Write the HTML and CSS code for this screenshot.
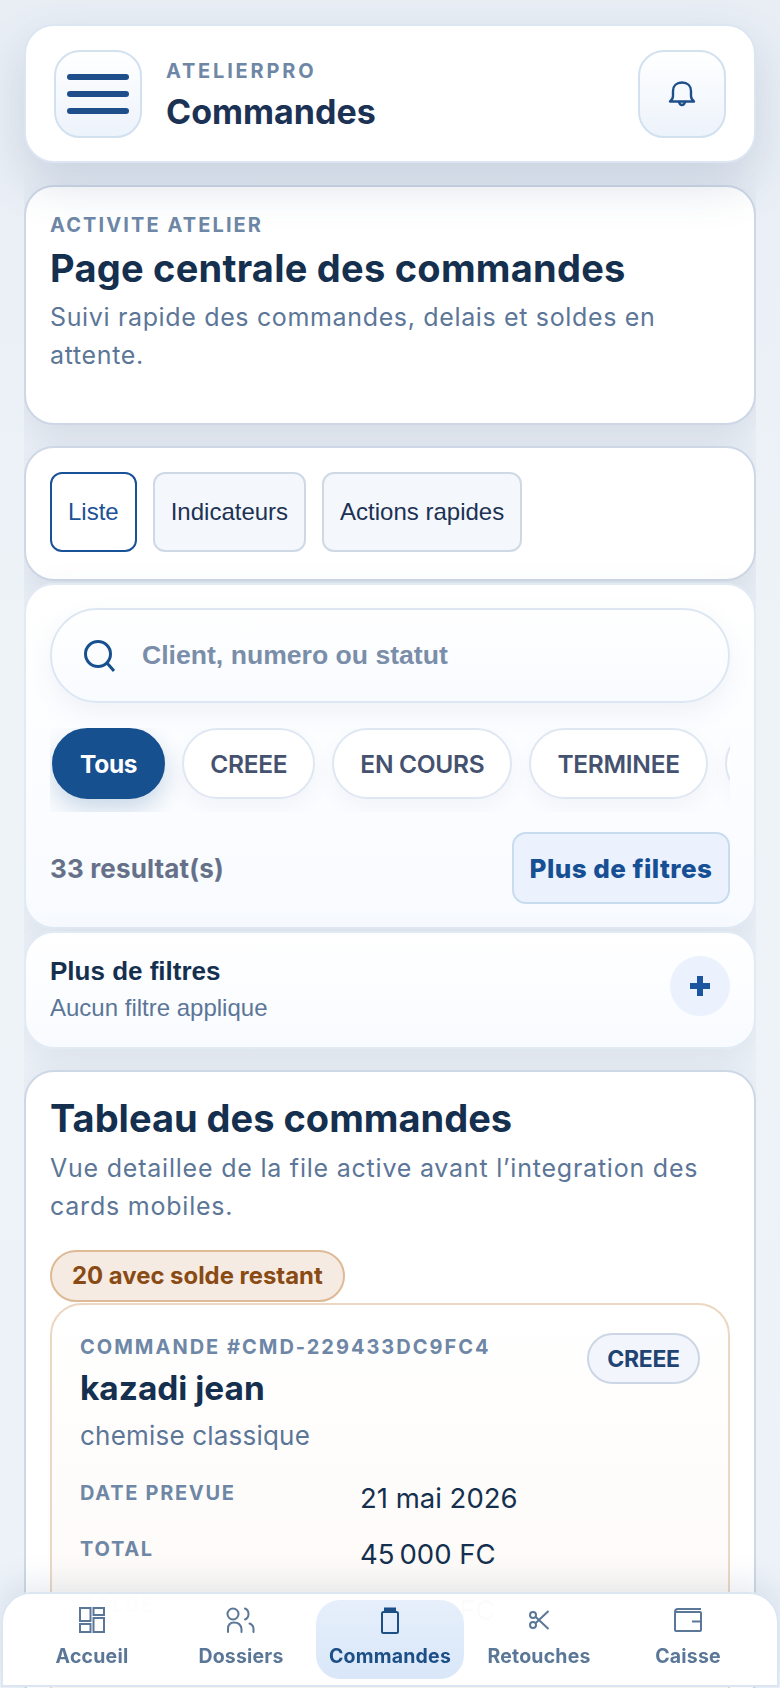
FILE: index.html
```html
<!DOCTYPE html>
<html lang="fr">
<head>
<meta charset="utf-8">
<title>AtelierPro - Commandes</title>
<link rel="stylesheet" href="styles.css">
</head>
<body>
<div class="app">
  <header class="topbar">
    <button class="menu-btn" aria-label="Menu"><span></span><span></span><span></span></button>
    <div class="topbar-text">
      <div class="brand">ATELIERPRO</div>
      <div class="page-name">Commandes</div>
    </div>
    <button class="bell-btn" aria-label="Notifications">
      <svg width="28" height="28" viewBox="0 0 28 28" fill="none" stroke="#1e4f8a" stroke-width="2.4" stroke-linejoin="round" stroke-linecap="round"><path d="M2 21.5h24c-2-1.500-3-3-3-5.500v-5c0-5-3.500-8.500-9-8.500s-9 3.500-9 8.500v5c0 2.500-1 4-3 5.500z"/><path d="M11 22c.5 2 1.500 3 3 3s2.500-1 3-3"/></svg>
    </button>
  </header>
  <main class="content">
    <section class="card hero">
      <div class="eyebrow">ACTIVITE ATELIER</div>
      <h1 class="hero-title">Page centrale des commandes</h1>
      <p class="muted-copy">Suivi rapide des commandes, delais et soldes en attente.</p>
    </section>
    <div class="stack">
      <section class="card tabs-card">
        <button class="tab tab-active">Liste</button>
        <button class="tab">Indicateurs</button>
        <button class="tab">Actions rapides</button>
      </section>
      <section class="soft-card search-card">
        <div class="search">
          <svg width="32" height="32" viewBox="0 0 32 32" fill="none" stroke="#17508f" stroke-width="3"><circle cx="15" cy="14" r="12.500"/><path d="M24 23l7 8"/></svg>
          <span class="search-text">Client, numero ou statut</span>
        </div>
        <div class="chips">
          <span class="chip chip-on">Tous</span>
          <span class="chip">CREEE</span>
          <span class="chip">EN COURS</span>
          <span class="chip">TERMINEE</span>
          <span class="chip chip-hidden" aria-hidden="true"></span>
        </div>
        <div class="result-row">
          <span class="result-count">33 resultat(s)</span>
          <button class="more-btn">Plus de filtres</button>
        </div>
      </section>
      <section class="soft-card filter-card">
        <div>
          <div class="filter-title">Plus de filtres</div>
          <div class="filter-sub">Aucun filtre applique</div>
        </div>
        <span class="plus-btn"><svg width="20" height="20" viewBox="0 0 20 20" fill="#1c559f"><path d="M7 0h6v7h7v6h-7v7H7v-7H0V7h7z"/></svg></span>
      </section>
    </div>
    <section class="card table-card">
      <h2 class="table-title">Tableau des commandes</h2>
      <p class="muted-copy">Vue detaillee de la file active avant l’integration des cards mobiles.</p>
      <div class="balance-pill">20 avec solde restant</div>
      <article class="order">
        <div class="order-head">
          <div>
            <div class="order-num">COMMANDE #CMD-229433DC9FC4</div>
            <div class="order-name">kazadi jean</div>
            <div class="order-item">chemise classique</div>
          </div>
          <span class="status">CREEE</span>
        </div>
        <dl class="facts">
          <dt>DATE PREVUE</dt><dd>21 mai 2026</dd>
          <dt>TOTAL</dt><dd>45&#8239;000 FC</dd>
          <dt>SOLDE</dt><dd>45&#8239;000 FC</dd>
        </dl>
      </article>
    </section>
  </main>
</div>
<nav class="tabbar">
  <a class="nav-item">
    <svg width="26" height="26" viewBox="0 0 26 26" fill="none" stroke="#5b7797" stroke-width="2"><rect x="1" y="1" width="10.500" height="13"/><rect x="14.500" y="1" width="10.500" height="7"/><rect x="1" y="17" width="10.500" height="8"/><rect x="14.500" y="11" width="10.500" height="14"/></svg>
    <span>Accueil</span>
  </a>
  <a class="nav-item">
    <svg width="30" height="26" viewBox="0 0 30 26" fill="none" stroke="#5b7797" stroke-width="2" stroke-linecap="round"><circle cx="7" cy="7" r="5.500"/><path d="M19 1.500c2.500 1 3.500 3 3.500 5.500s-1 4.500-3.500 5.500"/><path d="M2 25v-3c0-4 2-6.500 6-6.500s7 2.500 7.500 6.500v3"/><path d="M23.500 16.500c2.500 1 4 3 4 5.500v3"/></svg>
    <span>Dossiers</span>
  </a>
  <a class="nav-item nav-on">
    <svg width="20" height="28" viewBox="0 0 20 28" fill="none" stroke="#1d4f87" stroke-width="2"><rect x="2" y="6" width="16" height="21" rx="1.500"/><path d="M5 6V2.500h10V6" fill="#1d4f87"/></svg>
    <span>Commandes</span>
  </a>
  <a class="nav-item">
    <svg width="22" height="26" viewBox="0 0 22 26" fill="none" stroke="#5b7797" stroke-width="2"><circle cx="5" cy="8" r="3"/><circle cx="5" cy="18" r="3"/><path d="M7.500 9.800L20.500 22M7.500 16.200L20.500 4"/></svg>
    <span>Retouches</span>
  </a>
  <a class="nav-item">
    <svg width="30" height="26" viewBox="0 0 30 26" fill="none" stroke="#5b7797" stroke-width="2"><path d="M5 2h23M2 5c0-2 1-3 3-3"/><rect x="2" y="5" width="26" height="19" rx="1"/><path d="M19 14.500h9"/></svg>
    <span>Caisse</span>
  </a>
</nav>
</body>
</html>
```
FILE: styles.css
```css
* { box-sizing: border-box; }
html, body { margin: 0; height: 1688px; overflow: hidden; }
body {
  background: linear-gradient(180deg, #e9eef5 0%, #eef3f8 40%, #edf2f8 100%);
  font-family: Inter, "Liberation Sans", sans-serif;
  color: #15304f;
}
button { font: inherit; padding: 0; }
p, h1, h2, dl, dd { margin: 0; }

.app { display: flex; flex-direction: column; height: 1688px; padding-top: 24px; }

.topbar {
  position: relative;
  z-index: 2;
  flex: none;
  margin: 0 24px;
  height: 139px;
  padding: 0 28px;
  display: flex;
  align-items: center;
  gap: 24px;
  background: #fff;
  border: 2px solid #dbe6f2;
  border-radius: 30px;
  box-shadow: 0 20px 48px rgba(64, 94, 135, 0.2);
}
.menu-btn, .bell-btn {
  flex: none;
  width: 88px;
  height: 88px;
  border-radius: 26px;
  border: 2px solid #d2e1f0;
  background: linear-gradient(180deg, #fff 0%, #edf3fb 100%);
  display: flex;
  align-items: center;
  justify-content: center;
}
.menu-btn { flex-direction: column; gap: 11px; }
.menu-btn span { display: block; width: 62px; height: 6px; border-radius: 3px; background: #1e4f8a; }
.bell-btn { margin-left: auto; }
.topbar-text { padding-top: 5px; }
.brand { font-size: 20px; line-height: 24px; font-weight: 700; letter-spacing: 0.14em; color: #6e87a6; }
.page-name { font-size: 34px; line-height: 42px; margin-top: 8px; font-weight: 700; color: #1c3254; }

.content {
  flex: 1;
  min-height: 0;
  margin: 0 24px;
  padding-top: 22px;
  overflow: hidden;
  display: flex;
  flex-direction: column;
  gap: 21px;
}
.stack { display: flex; flex-direction: column; gap: 2px; }

.card {
  flex: none;
  background: #fff;
  border: 2px solid #cdd7e5;
  border-radius: 30px;
  box-shadow: 0 12px 36px rgba(64, 84, 125, 0.14);
}
.soft-card {
  flex: none;
  background: linear-gradient(180deg, #fff 0%, #f8fbff 100%);
  border: 2px solid #e2eaf4;
  border-radius: 30px;
  box-shadow: 0 12px 36px rgba(64, 84, 125, 0.1);
}

.hero { height: 240px; padding: 26px 24px 0; }
.eyebrow { font-size: 20px; line-height: 24px; font-weight: 700; letter-spacing: 0.105em; color: #6e87a6; }
.hero-title { font-size: 38px; line-height: 48px; margin-top: 7px; font-weight: 700; letter-spacing: 0.25px; color: #15304f; }
.muted-copy { font-size: 25px; line-height: 38px; color: #5c7698; margin-top: 6px; letter-spacing: 0.65px; }

.tabs-card { height: 135px; padding: 24px 24px 0; display: flex; gap: 16px; align-items: flex-start; }
.tab {
  height: 80px;
  padding: 0 16px;
  font-family: "Liberation Sans", Arial, sans-serif;
  font-size: 24px;
  color: #1c3254;
  background: #f4f7fc;
  border: 2px solid #cfd9e6;
  border-radius: 12px;
}
.tab-active { background: #fff; border-color: #1a5298; color: #1a5298; }

.search-card { height: 346px; padding: 23px 24px 0; }
.search {
  height: 95px;
  padding: 0 31px;
  display: flex;
  align-items: center;
  gap: 27px;
  border: 2px solid #dde7f3;
  border-radius: 48px;
  background: linear-gradient(180deg, #fff 0%, #f8fbff 100%);
  box-shadow: 0 10px 24px rgba(80, 105, 155, 0.08);
}
.search-text { font-family: "Liberation Sans", Arial, sans-serif; font-size: 26.600px; font-weight: 700; color: #7a8ea9; }
.chips { margin-top: 25px; height: 84px; display: flex; gap: 17px; overflow: hidden; padding: 0 0 0 2px; }
.chip {
  flex: none;
  height: 71px;
  padding: 0 26px;
  display: flex;
  align-items: center;
  font-size: 24.500px;
  font-weight: 600;
  letter-spacing: -0.012em;
  color: #445270;
  background: #fff;
  border: 2px solid #dfe7f2;
  border-radius: 36px;
  box-shadow: 0 8px 20px rgba(80, 105, 155, 0.06);
}
.chip-hidden { width: 120px; }
.chip-on { background: #17508f; border-color: #17508f; color: #fff; font-weight: 700; box-shadow: 0 10px 24px rgba(23, 80, 143, 0.22); }

.result-row { margin-top: 20px; display: flex; justify-content: space-between; align-items: center; }
.result-count { font-size: 26px; font-weight: 700; color: #667189; letter-spacing: 0.15px; }
.more-btn {
  height: 72px;
  width: 218px;
  font-size: 26px;
  font-weight: 800;
  letter-spacing: 0.45px;
  color: #174f95;
  background: #ebf2fd;
  border: 2px solid #c9dbef;
  border-radius: 14px;
}

.filter-card { height: 118px; padding: 20px 24px 0; display: flex; justify-content: space-between; align-items: flex-start; }
.filter-title { font-family: "Liberation Sans", Arial, sans-serif; font-size: 26px; line-height: 36px; font-weight: 700; color: #15304f; }
.filter-sub { font-family: "Liberation Sans", Arial, sans-serif; font-size: 24px; line-height: 37px; color: #5c7698; }
.plus-btn { width: 60px; height: 60px; margin-top: 3px; border-radius: 50%; background: #ebf2fd; display: flex; align-items: center; justify-content: center; }

.table-card { padding: 22px 24px 0; height: 640px; }
.table-title { font-size: 38px; line-height: 48px; font-weight: 700; color: #15304f; }
.table-card .muted-copy { margin-top: 7px; letter-spacing: 0.78px; }
.balance-pill {
  display: table;
  position: relative;
  z-index: 1;
  margin-top: 25px;
  height: 52px;
  line-height: 48px;
  padding: 0 20px;
  font-size: 23.900px;
  font-weight: 700;
  color: #8a4a14;
  background: #f5ebe2;
  border: 2px solid #deba97;
  border-radius: 26px;
}
.order {
  margin-top: 1px;
  height: 420px;
  padding: 28px 28px;
  border: 2px solid #ecd7c3;
  border-radius: 32px;
  background: linear-gradient(180deg, #fff 0%, #fdf9f5 100%);
}
.order-head { display: flex; justify-content: space-between; align-items: flex-start; }
.order-num { font-size: 20px; line-height: 28px; font-weight: 700; letter-spacing: 0.1em; color: #6e87a6; }
.order-name { font-size: 33.400px; line-height: 42px; margin-top: 6px; font-weight: 700; color: #15304f; }
.order-item { font-size: 26px; line-height: 36px; margin-top: 9px; letter-spacing: 0.2px; color: #5c7698; }
.status {
  height: 51px;
  width: 113px;
  display: flex;
  align-items: center;
  justify-content: center;
  font-size: 23px;
  font-weight: 700;
  letter-spacing: -0.015em;
  color: #1f4372;
  background: #f2f6fc;
  border: 2px solid #ccd6e5;
  border-radius: 26px;
}
.facts { margin-top: 27px; display: grid; grid-template-columns: 280px 1fr; row-gap: 22px; }
.facts dt { font-size: 20px; line-height: 24px; font-weight: 700; letter-spacing: 0.085em; color: #6e87a6; }
.facts dd { font-size: 27.500px; line-height: 34px; margin-top: 0; color: #15304f; }

.tabbar {
  position: fixed;
  left: 1px;
  right: 1px;
  top: 1592px;
  bottom: 1px;
  z-index: 3;
  padding: 6px 15px;
  display: grid;
  grid-template-columns: repeat(5, 148px);
  column-gap: 1px;
  background: rgba(255, 255, 255, 0.985);
  border: 2px solid #dbe6f2;
  border-radius: 30px 30px 0 0;
  box-shadow: 0 -10px 30px rgba(64, 94, 135, 0.12);
}
.nav-item {
  display: flex;
  flex-direction: column;
  align-items: center;
  padding-top: 6px;
  font-size: 19.500px;
  line-height: 26px;
  letter-spacing: 0.2px;
  font-weight: 700;
  color: #5b7797;
  border-radius: 24px;
}
.nav-item svg { height: 28px; flex: none; margin-bottom: 9px; }
.nav-on { color: #1d4f87; background: linear-gradient(180deg, #e6effb 0%, #d9e7f9 100%); }
```
